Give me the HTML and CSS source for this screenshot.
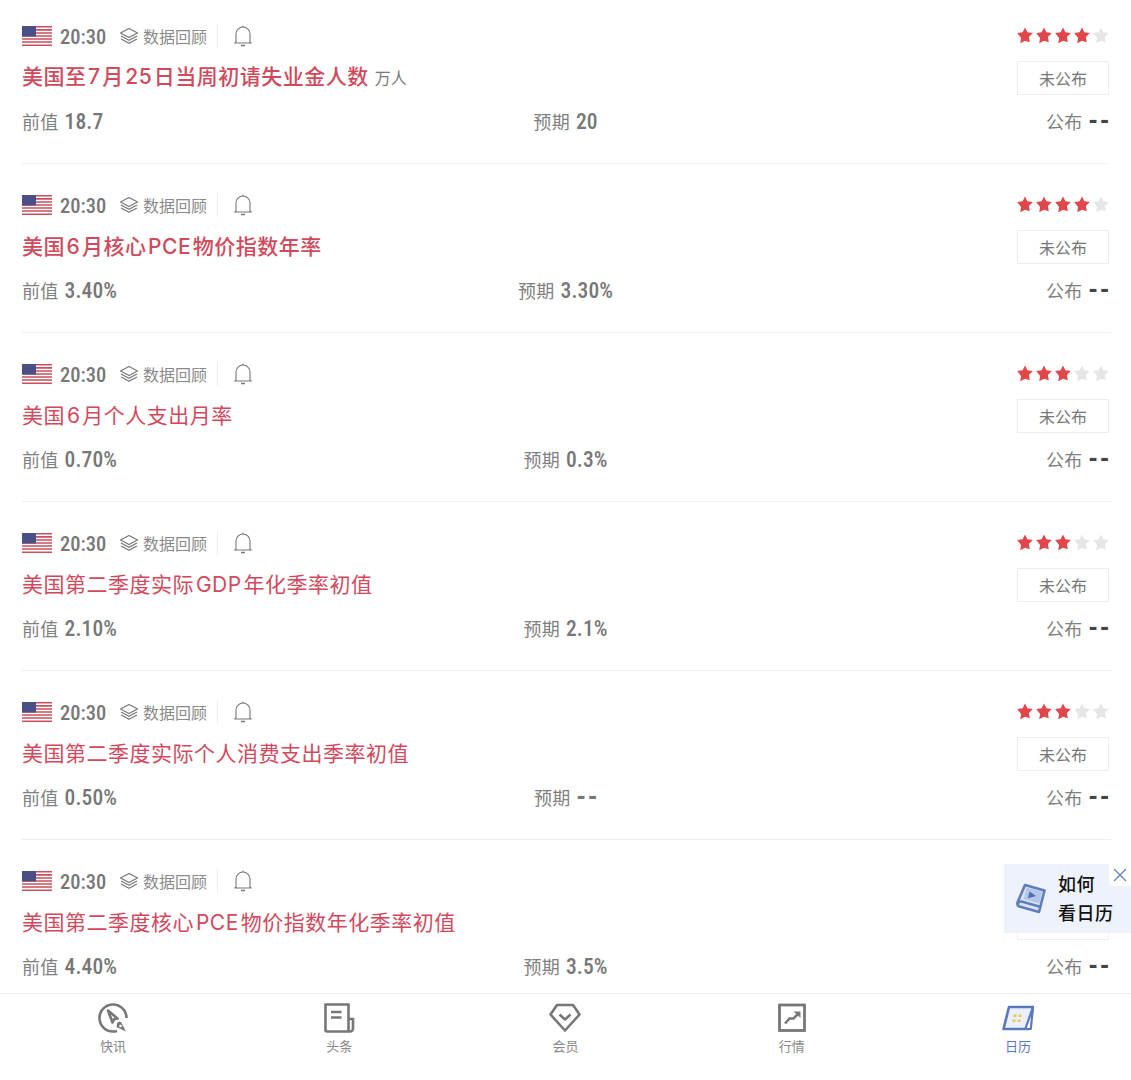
FILE: index.html
```html
<!DOCTYPE html>
<html lang="zh">
<head>
<meta charset="utf-8">
<title>日历</title>
<link rel="stylesheet" href="styles.css">
</head>
<body>
<svg class="defs" width="0" height="0" aria-hidden="true">
  <symbol id="flag" viewBox="0 0 30 20">
    <rect width="30" height="20" fill="#fff"/>
    <path d="M0 0.8h30M0 3.9h30M0 7h30M0 10h30M0 13h30M0 16h30M0 19.2h30" stroke="#c8505c" stroke-width="1.6"/>
    <rect width="14" height="10.5" fill="#4a4f86"/>
  </symbol>
  <symbol id="layers" viewBox="0 0 20 18">
    <path d="M10 1.5 18.5 6 10 10.500 1.500 6Z" fill="none" stroke="#777" stroke-width="1.200" stroke-linejoin="round"/>
    <path d="M2 9l8 4.300L18 9M2 12l8 4.300L18 12" fill="none" stroke="#777" stroke-width="1.200" stroke-linejoin="round"/>
  </symbol>
  <symbol id="bell" viewBox="0 0 18 22">
    <path d="M2 17V9a7 7 0 0 1 14 0v8l1.200 1H.8Z" fill="none" stroke="#777" stroke-width="1.100" stroke-linejoin="round"/>
    <path d="M9 2V.8M7 20.500h4" fill="none" stroke="#777" stroke-width="1.300"/>
  </symbol>
  <symbol id="star" viewBox="0 0 16 16">
    <path d="M8 .4l2.400 4.900 5.400.8-3.900 3.800.9 5.400L8 13.700l-4.800 2.600.9-5.400L.2 6.100l5.400-.8Z"/>
  </symbol>
</svg>

<main class="app">
  <section class="list">
    <article class="row">
      <div class="head">
        <svg class="flag"><use href="#flag"/></svg><span class="time">20:30</span>
        <span class="review"><svg class="layers"><use href="#layers"/></svg>数据回顾</span>
        <svg class="bell"><use href="#bell"/></svg>
        <span class="stars"><svg class="on"><use href="#star"/></svg><svg class="on"><use href="#star"/></svg><svg class="on"><use href="#star"/></svg><svg class="on"><use href="#star"/></svg><svg><use href="#star"/></svg></span>
      </div>
      <div class="main">
        <h2 class="title strong">美国至 7 月 25 日当周初请失业金人数<small>万人</small></h2>
        <span class="badge">未公布</span>
      </div>
      <div class="vals"><span>前值<b>18.7</b></span><span>预期<b>20</b></span><span class="pub">公布<b class="dash">--</b></span></div>
    </article>
    <article class="row">
      <div class="head">
        <svg class="flag"><use href="#flag"/></svg><span class="time">20:30</span>
        <span class="review"><svg class="layers"><use href="#layers"/></svg>数据回顾</span>
        <svg class="bell"><use href="#bell"/></svg>
        <span class="stars"><svg class="on"><use href="#star"/></svg><svg class="on"><use href="#star"/></svg><svg class="on"><use href="#star"/></svg><svg class="on"><use href="#star"/></svg><svg><use href="#star"/></svg></span>
      </div>
      <div class="main">
        <h2 class="title strong">美国 6 月核心 PCE 物价指数年率</h2>
        <span class="badge">未公布</span>
      </div>
      <div class="vals"><span>前值<b>3.40%</b></span><span>预期<b>3.30%</b></span><span class="pub">公布<b class="dash">--</b></span></div>
    </article>
    <article class="row">
      <div class="head">
        <svg class="flag"><use href="#flag"/></svg><span class="time">20:30</span>
        <span class="review"><svg class="layers"><use href="#layers"/></svg>数据回顾</span>
        <svg class="bell"><use href="#bell"/></svg>
        <span class="stars"><svg class="on"><use href="#star"/></svg><svg class="on"><use href="#star"/></svg><svg class="on"><use href="#star"/></svg><svg><use href="#star"/></svg><svg><use href="#star"/></svg></span>
      </div>
      <div class="main">
        <h2 class="title">美国 6 月个人支出月率</h2>
        <span class="badge">未公布</span>
      </div>
      <div class="vals"><span>前值<b>0.70%</b></span><span>预期<b>0.3%</b></span><span class="pub">公布<b class="dash">--</b></span></div>
    </article>
    <article class="row">
      <div class="head">
        <svg class="flag"><use href="#flag"/></svg><span class="time">20:30</span>
        <span class="review"><svg class="layers"><use href="#layers"/></svg>数据回顾</span>
        <svg class="bell"><use href="#bell"/></svg>
        <span class="stars"><svg class="on"><use href="#star"/></svg><svg class="on"><use href="#star"/></svg><svg class="on"><use href="#star"/></svg><svg><use href="#star"/></svg><svg><use href="#star"/></svg></span>
      </div>
      <div class="main">
        <h2 class="title">美国第二季度实际 GDP 年化季率初值</h2>
        <span class="badge">未公布</span>
      </div>
      <div class="vals"><span>前值<b>2.10%</b></span><span>预期<b>2.1%</b></span><span class="pub">公布<b class="dash">--</b></span></div>
    </article>
    <article class="row">
      <div class="head">
        <svg class="flag"><use href="#flag"/></svg><span class="time">20:30</span>
        <span class="review"><svg class="layers"><use href="#layers"/></svg>数据回顾</span>
        <svg class="bell"><use href="#bell"/></svg>
        <span class="stars"><svg class="on"><use href="#star"/></svg><svg class="on"><use href="#star"/></svg><svg class="on"><use href="#star"/></svg><svg><use href="#star"/></svg><svg><use href="#star"/></svg></span>
      </div>
      <div class="main">
        <h2 class="title">美国第二季度实际个人消费支出季率初值</h2>
        <span class="badge">未公布</span>
      </div>
      <div class="vals"><span>前值<b>0.50%</b></span><span>预期<b class="dash soft">--</b></span><span class="pub">公布<b class="dash">--</b></span></div>
    </article>
    <article class="row">
      <div class="head">
        <svg class="flag"><use href="#flag"/></svg><span class="time">20:30</span>
        <span class="review"><svg class="layers"><use href="#layers"/></svg>数据回顾</span>
        <svg class="bell"><use href="#bell"/></svg>
      </div>
      <div class="main">
        <h2 class="title">美国第二季度核心 PCE 物价指数年化季率初值</h2>
        <span class="badge"></span>
      </div>
      <div class="vals"><span>前值<b>4.40%</b></span><span>预期<b>3.5%</b></span><span class="pub">公布<b class="dash">--</b></span></div>
    </article>
  </section>

  <aside class="promo">
    <svg class="book" viewBox="0 0 30 32">
      <path d="M9 2 28.500 7.500 23 29 3.500 23.500Q.8 22.500 1.500 19.500Z" fill="#dbe5f6" stroke="#5f7cbc" stroke-width="2.600" stroke-linejoin="round"/>
      <path d="M2 20.500q1-2.500 3.500-2L25 24" fill="none" stroke="#5f7cbc" stroke-width="2.400"/>
      <path d="M10.500 4.500 26 8.800 23.300 20.500 7.500 16Z" fill="#b4c6e8"/>
      <path d="M13.500 8.500l6.500 4.500-8 2.200Z" fill="#4f6db0"/>
    </svg>
    <p class="promo-text">如何<br>看日历</p>
    <span class="close"><svg viewBox="0 0 14 14"><path d="M1 1l12 12M13 1 1 13" stroke="#5f7cbc" stroke-width="1.200"/></svg></span>
  </aside>

  <nav class="tabs">
    <a class="tab">
      <svg viewBox="0 0 32 30" fill="none" stroke="#777">
        <path d="M29.500 15A13.500 13.500 0 1 0 16 28.500c1.500 0 2.800-.2 4-.6" stroke-width="2.600"/>
        <path d="M11 7.500l9.500 8-3.500.8-1.500 3.200Z" stroke-width="2.600" stroke-linejoin="round"/>
        <path d="M20 20.500a2.800 2.800 0 0 1 4-1.500l5 9.500-9.500-4.500Z" fill="#777" stroke="none"/>
        <circle cx="23.500" cy="23" r="1.300" fill="#fff" stroke="none"/>
      </svg>
      <span>快讯</span>
    </a>
    <a class="tab">
      <svg viewBox="0 0 32 30" fill="none" stroke="#777" stroke-width="2.600">
        <path d="M25.500 16V1.500H2.500V27a1.500 1.500 0 0 0 1.500 1.500h23a3 3 0 0 0 3-3V16h-4.500v12"/>
        <path d="M8 9h10.500M8 14.500h10.500" stroke-width="2.400"/>
      </svg>
      <span>头条</span>
    </a>
    <a class="tab">
      <svg viewBox="0 0 32 30" fill="none" stroke="#777" stroke-width="2.600" stroke-linejoin="round">
        <path d="M8 2h16l6.500 9.500L16 27.500 1.500 11.500Z"/>
        <path d="M10.500 11.500l5.500 5 5.500-5" stroke-width="2.600"/>
      </svg>
      <span>会员</span>
    </a>
    <a class="tab">
      <svg viewBox="0 0 32 30" fill="none" stroke="#777">
        <rect x="3.500" y="2" width="25" height="25.500" stroke-width="2.800"/>
        <path d="M9 20.500l4.500-5h4l4-4" stroke-width="2.600"/>
        <path d="M17.500 8.500h7v6.500Z" fill="#777" stroke="none"/>
      </svg>
      <span>行情</span>
    </a>
    <a class="tab active">
      <svg viewBox="0 0 32 26" class="cal">
        <path d="M7 2h24l-4 22H1.500Z" fill="#eaf0fb" stroke="#5b78bd" stroke-width="2.600" stroke-linejoin="round"/>
        <path d="M31 2l-2.200 22h-5.500Z" fill="#fff" stroke="#5b78bd" stroke-width="2.200" stroke-linejoin="round"/>
        <path d="M11.500 9.500h3v2.500h-3zM16.500 9.500h3v2.500h-3zM10.500 14.500h3V17h-3zM15.500 14.500h3V17h-3z" fill="#e8c65a"/>
      </svg>
      <span>日历</span>
    </a>
  </nav>
</main>
</body>
</html>
```
FILE: styles.css
```css
* { box-sizing: border-box; }
html, body { margin: 0; height: 100%; }
body {
  background: #fff;
  font-family: "Noto Sans CJK SC", "Noto Sans", sans-serif;
  color: #777;
}
.defs { position: absolute; }
.app {
  position: relative;
  height: 1080px;
  display: flex;
  flex-direction: column;
  overflow: hidden;
}
.list {
  flex: 1;
  min-height: 0;
  overflow: hidden;
  padding: 0 20px 0 22px;
}
.row {
  padding: 24px 2px 22px 0;
  border-bottom: 1px solid #efefef;
}
.row:first-child {
  padding-top: 19px;
  border-image: linear-gradient(to right, #efefef 1084px, transparent 1084px) 1;
}
.head {
  height: 34px;
  display: flex;
  align-items: center;
}
.flag { width: 30px; height: 20px; flex: none; }
.time {
  margin: 1px 0 0 8px;
  width: 59px;
  font: 500 20.500px/34px "Roboto Condensed", sans-serif;
  color: #777;
}
.review {
  display: flex;
  align-items: center;
  width: 99px;
  height: 24px;
  border-right: 1px solid #eee;
  font-size: 16px;
  color: #8a8a8a;
  white-space: nowrap;
}
.layers { width: 20px; height: 18px; margin-right: 4px; flex: none; }
.bell { width: 18px; height: 22px; margin-left: 16px; flex: none; }
.stars { margin: -2px 0 0 auto; display: flex; gap: 3px; }
.stars svg { width: 16px; height: 16px; fill: #e6e6e6; }
.stars svg.on { fill: #e0464a; }
.main {
  height: 50px;
  display: flex;
  align-items: center;
  justify-content: space-between;
}
.title {
  margin: 0 0 1px;
  font: 400 21px/44px "Inter", "Noto Sans CJK SC", sans-serif;
  letter-spacing: .5px;
  color: #d2495d;
  word-spacing: -4.500px;
  white-space: nowrap;
}
.title.strong { font-weight: 500; color: #cf4a5c; }
.title small {
  margin-left: 6px;
  font-size: 16px;
  font-weight: 400;
  letter-spacing: 0;
  color: #777;
}
.badge {
  width: 92px;
  height: 34px;
  border: 1px solid #eee;
  font-size: 16px;
  line-height: 32px;
  text-align: center;
  color: #777;
}
.vals {
  height: 38px;
  padding-bottom: 2px;
  display: grid;
  grid-template-columns: 1fr auto 1fr;
  align-items: center;
  font-size: 18px;
  line-height: 28px;
  letter-spacing: .3px;
  color: #808080;
  white-space: nowrap;
}
.vals b {
  margin-left: 6px;
  font: 500 21.500px/0 "Roboto Condensed", sans-serif;
  letter-spacing: .1px;
  color: #777;
}
.vals b.dash {
  font: 700 26px/0 "Liberation Sans", sans-serif;
  letter-spacing: 3px;
  margin-right: -3px;
  vertical-align: 1px;
  color: #444;
}
.vals b.dash.soft { color: #777; }
.pub { text-align: right; }
.promo {
  position: absolute;
  top: 864px;
  right: 0;
  width: 127px;
  height: 69px;
  background: #eef3fb;
  display: flex;
  align-items: center;
}
.book { width: 30px; height: 32px; margin-left: 12px; flex: none; }
.promo-text {
  margin: 0 0 2px 12px;
  font-size: 18px;
  font-weight: 500;
  letter-spacing: .5px;
  line-height: 29px;
  color: #111;
  white-space: nowrap;
}
.close {
  position: absolute;
  top: 0;
  right: 0;
  width: 22px;
  height: 22px;
  background: #fff;
  border-bottom-left-radius: 6px;
  display: flex;
  align-items: center;
  justify-content: center;
}
.close svg { width: 14px; height: 14px; }
.tabs {
  flex: none;
  height: 87px;
  background: #fff;
  border-top: 1px solid #eee;
  display: grid;
  grid-template-columns: repeat(5, 1fr);
  position: relative;
}
.tab {
  display: flex;
  flex-direction: column;
  align-items: center;
  padding-top: 9px;
  font-size: 13px;
  line-height: 18px;
  color: #888;
}
.tab svg { width: 32px; height: 30px; margin-bottom: 4px; }
.tab.active { color: #5b78bd; }
```
